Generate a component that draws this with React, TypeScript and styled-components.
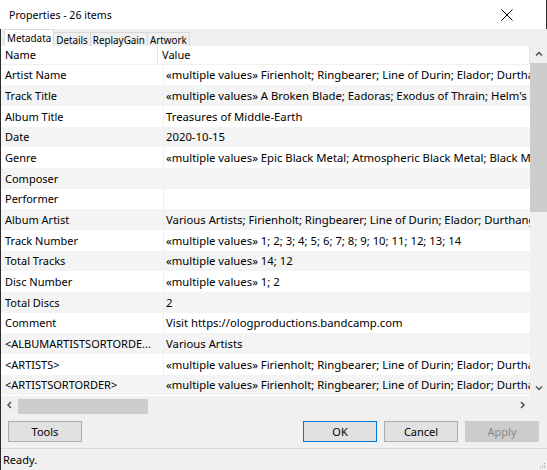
import React from "react";
import styled, { createGlobalStyle } from "styled-components";

const GlobalStyle = createGlobalStyle`
  html, body {
    margin: 0;
    padding: 0;
    background: #f0f0f0;
  }
  body {
    font-family: "Noto Sans", "Open Sans", sans-serif;
    font-size: 11px;
    color: #000;
  }
`;

interface Row {
  name: string;
  value: string;
}

const rows: Row[] = [
  { name: "Artist Name", value: "«multiple values» Firienholt; Ringbearer; Line of Durin; Elador; Durthang; Ossuary" },
  { name: "Track Title", value: "«multiple values» A Broken Blade; Eadoras; Exodus of Thrain; Helm's Deep; The Last Battle" },
  { name: "Album Title", value: "Treasures of Middle-Earth" },
  { name: "Date", value: "2020-10-15" },
  { name: "Genre", value: "«multiple values» Epic Black Metal; Atmospheric Black Metal; Black Metal" },
  { name: "Composer", value: "" },
  { name: "Performer", value: "" },
  { name: "Album Artist", value: "Various Artists; Firienholt; Ringbearer; Line of Durin; Elador; Durthang; Ossuary" },
  { name: "Track Number", value: "«multiple values» 1; 2; 3; 4; 5; 6; 7; 8; 9; 10; 11; 12; 13; 14" },
  { name: "Total Tracks", value: "«multiple values» 14; 12" },
  { name: "Disc Number", value: "«multiple values» 1; 2" },
  { name: "Total Discs", value: "2" },
  { name: "Comment", value: "Visit https://ologproductions.bandcamp.com" },
  { name: "<ALBUMARTISTSORTORDE...", value: "Various Artists" },
  { name: "<ARTISTS>", value: "«multiple values» Firienholt; Ringbearer; Line of Durin; Elador; Durthang; Ossuary" },
  { name: "<ARTISTSORTORDER>", value: "«multiple values» Firienholt; Ringbearer; Line of Durin; Elador; Durthang; Ossuary" },
];

const tabs = ["Metadata", "Details", "ReplayGain", "Artwork"];

const Window = styled.div`
  width: 547px;
  height: 470px;
  display: flex;
  flex-direction: column;
  background: #f0f0f0;
  overflow: hidden;
`;

const TitleBar = styled.div`
  height: 29px;
  flex: none;
  background: #fff;
  display: flex;
  align-items: center;
  justify-content: space-between;
  padding-left: 9px;
  border-right: 1px solid #2b2b2b;
  font-size: 10.6px;
`;

const CloseButton = styled.div`
  width: 46px;
  height: 29px;
  display: flex;
  align-items: center;
  justify-content: center;
  margin-right: 16px;
`;

const Body = styled.div`
  flex: 1;
  display: flex;
  flex-direction: column;
  border-left: 1px solid #2b2b2b;
`;

const TabStrip = styled.div`
  height: 17px;
  display: flex;
  align-items: flex-end;
  padding-left: 4px;
`;

const Tab = styled.div<{ $active?: boolean }>`
  height: ${(p) => (p.$active ? 17 : 14)}px;
  box-sizing: border-box;
  border: 1px solid #d9d9d9;
  border-bottom: none;
  margin-left: -1px;
  background: ${(p) => (p.$active ? "#fff" : "#f0f0f0")};
  display: flex;
  align-items: center;
  padding: 0 2px;
  font-size: 9.85px;
  white-space: nowrap;
  z-index: ${(p) => (p.$active ? 1 : 0)};
`;

const ListArea = styled.div`
  display: grid;
  grid-template-columns: 1fr 17px;
  grid-template-rows: 350px 18px;
`;

const List = styled.div`
  background: #fff;
  overflow: hidden;
`;

const HeaderRow = styled.div`
  height: 18.67px;
  display: flex;
  align-items: center;
  border-bottom: 1px solid #f0f0f0;
  box-sizing: border-box;
`;

const HeaderCell = styled.div<{ $w?: number }>`
  ${(p) => (p.$w ? `width: ${p.$w}px; flex: none;` : "flex: 1;")}
  height: 100%;
  display: flex;
  align-items: center;
  padding-left: 4px;
  box-sizing: border-box;
  border-right: 1px solid #e5e5e5;
`;

const DataRow = styled.div<{ $alt: boolean }>`
  height: 20.67px;
  display: flex;
  background: ${(p) => (p.$alt ? "#f4f4f4" : "#fff")};
  white-space: nowrap;
`;

const NameCell = styled.div`
  width: 163px;
  flex: none;
  display: flex;
  align-items: center;
  padding-left: 4px;
  box-sizing: border-box;
  overflow: hidden;
  border-right: 1px solid #f0f0f0;
`;

const ValueCell = styled.div`
  flex: 1;
  display: flex;
  align-items: center;
  padding-left: 2px;
  overflow: hidden;
  font-size: 11.3px;
`;

const VScroll = styled.div`
  background: #f0f0f0;
  display: flex;
  flex-direction: column;
  align-items: center;
`;

const ArrowBox = styled.div<{ $h: number; $w?: number }>`
  height: ${(p) => p.$h}px;
  width: ${(p) => (p.$w ? `${p.$w}px` : "100%")};
  display: flex;
  align-items: center;
  justify-content: center;
  flex: none;
`;

const VThumb = styled.div`
  width: 100%;
  height: 149px;
  background: #cdcdcd;
`;

const VTrack = styled.div`
  flex: 1;
`;

const HScroll = styled.div`
  background: #f0f0f0;
  display: flex;
  align-items: center;
`;

const HThumb = styled.div`
  width: 130px;
  height: 15px;
  margin-top: 3px;
  align-self: flex-start;
  background: #cdcdcd;
`;

const HTrack = styled.div`
  flex: 1;
`;

const Corner = styled.div`
  background: #f0f0f0;
`;

const ButtonBar = styled.div`
  height: 34px;
  display: flex;
  align-items: center;
  padding: 0 8px 0 7px;
  border-bottom: 1px solid #dadada;
`;

const Button = styled.div<{ $variant?: "default" | "disabled" }>`
  width: 74px;
  height: 21px;
  box-sizing: border-box;
  display: flex;
  align-items: center;
  justify-content: center;
  background: ${(p) => (p.$variant === "disabled" ? "#cccccc" : "#e1e1e1")};
  color: ${(p) => (p.$variant === "disabled" ? "#8a8a8a" : "#000")};
  border: 1px solid
    ${(p) =>
      p.$variant === "default" ? "#0078d7" : p.$variant === "disabled" ? "#cccccc" : "#adadad"};
  margin-left: 7px;
  &:first-child {
    margin-left: 0;
    margin-right: auto;
  }
`;

const StatusBar = styled.div`
  flex: 1;
  display: flex;
  align-items: center;
  justify-content: space-between;
  padding-left: 2px;
`;

const Grip = styled.div`
  align-self: flex-end;
  margin: 0 1px 1px 0;
  display: flex;
`;

const Chevron = ({ dir }: { dir: "up" | "down" | "left" | "right" }) => {
  const d = {
    up: "M2 5.5 L5 2.5 L8 5.5",
    down: "M2 3.5 L5 6.5 L8 3.5",
    left: "M6 2 L3 5 L6 8",
    right: "M4 2 L7 5 L4 8",
  }[dir];
  return (
    <svg width="10" height="10" viewBox="0 0 10 10">
      <path d={d} fill="none" stroke="#505050" strokeWidth="1.5" />
    </svg>
  );
};

export default function App() {
  return (
    <>
      <GlobalStyle />
      <Window>
        <TitleBar>
          <span>Properties - 26 items</span>
          <CloseButton>
            <svg width="12" height="12" viewBox="0 0 12 12">
              <path d="M0.5 0.5 L11.5 11.5 M11.5 0.5 L0.5 11.5" stroke="#000" strokeWidth="1" />
            </svg>
          </CloseButton>
        </TitleBar>
        <Body>
          <TabStrip>
            {tabs.map((t, i) => (
              <Tab key={t} $active={i === 0}>
                {t}
              </Tab>
            ))}
          </TabStrip>
          <ListArea>
            <List>
              <HeaderRow>
                <HeaderCell $w={157}>Name</HeaderCell>
                <HeaderCell>Value</HeaderCell>
              </HeaderRow>
              {rows.map((r, i) => (
                <DataRow key={r.name} $alt={i % 2 === 1}>
                  <NameCell>{r.name}</NameCell>
                  <ValueCell>{r.value}</ValueCell>
                </DataRow>
              ))}
            </List>
            <VScroll>
              <ArrowBox $h={17}>
                <Chevron dir="up" />
              </ArrowBox>
              <VThumb />
              <VTrack />
              <ArrowBox $h={17}>
                <Chevron dir="down" />
              </ArrowBox>
            </VScroll>
            <HScroll>
              <ArrowBox $h={18} $w={17}>
                <Chevron dir="left" />
              </ArrowBox>
              <HThumb />
              <HTrack />
              <ArrowBox $h={18} $w={17}>
                <Chevron dir="right" />
              </ArrowBox>
            </HScroll>
            <Corner />
          </ListArea>
          <ButtonBar>
            <Button>Tools</Button>
            <Button $variant="default">OK</Button>
            <Button>Cancel</Button>
            <Button $variant="disabled">Apply</Button>
          </ButtonBar>
          <StatusBar>
            <span>Ready.</span>
            <Grip>
              <svg width="7" height="7" viewBox="0 0 7 7">
                <rect x="5" y="1" width="1" height="1" fill="#a0a0a0" />
                <rect x="3" y="3" width="1" height="1" fill="#a0a0a0" />
                <rect x="5" y="3" width="1" height="1" fill="#a0a0a0" />
                <rect x="1" y="5" width="1" height="1" fill="#a0a0a0" />
                <rect x="3" y="5" width="1" height="1" fill="#a0a0a0" />
                <rect x="5" y="5" width="1" height="1" fill="#a0a0a0" />
              </svg>
            </Grip>
          </StatusBar>
        </Body>
      </Window>
    </>
  );
}
